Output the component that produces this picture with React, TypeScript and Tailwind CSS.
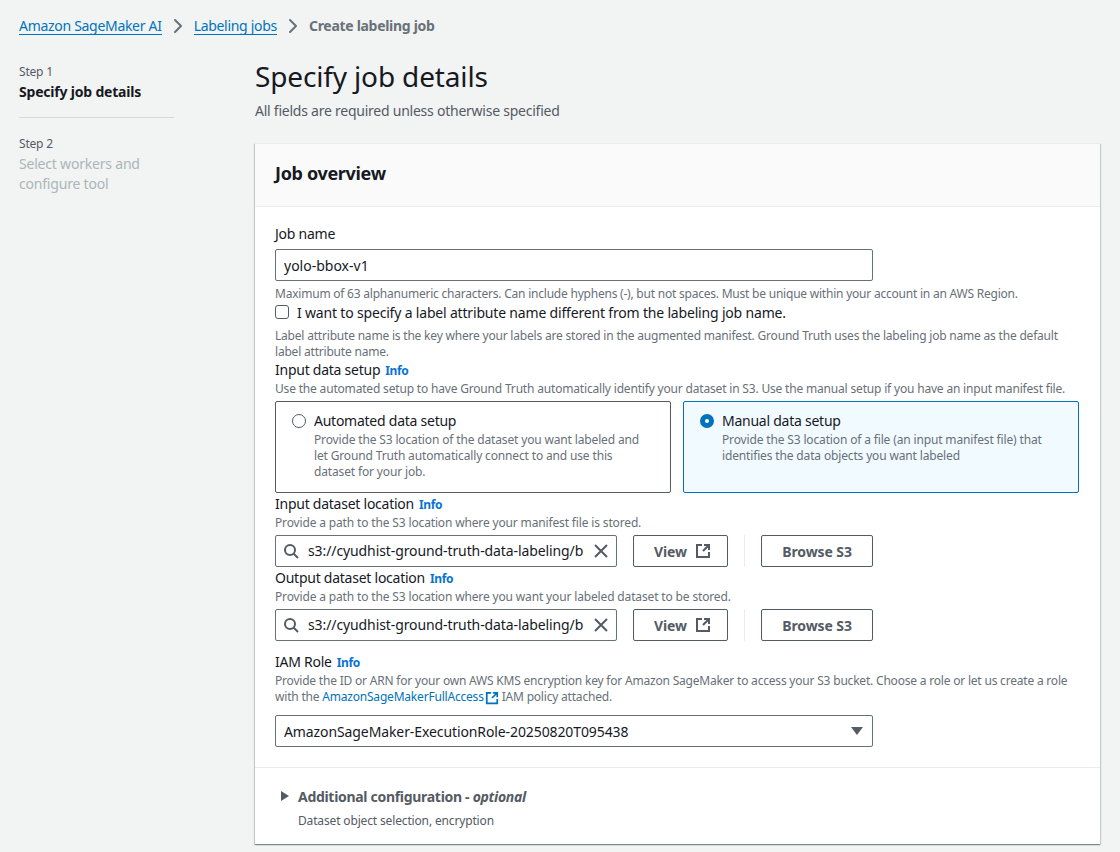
import { ChevronRight } from "lucide-react";

const FONT = "font-['Noto_Sans',sans-serif]";

function ExternalIcon({ className }: { className: string }) {
  return (
    <svg viewBox="0 0 16 16" fill="none" stroke="currentColor" strokeWidth="2" className={className}>
      <path d="M7 2H2v12h12V9" />
      <path d="M9 2h5v5M14 2L8 8" />
    </svg>
  );
}

function Info() {
  return <span className="ml-[5px] text-[12px] font-bold tracking-[-0.4px] text-[#0972d3]">Info</span>;
}

function Label({ children }: { children: React.ReactNode }) {
  return <div className="h-[20px] text-[14px] leading-[20px] tracking-[-0.25px] text-[#16191f]">{children}</div>;
}

function Hint({ children, tracking = "tracking-[-0.15px]" }: { children: React.ReactNode; tracking?: string }) {
  return <div className={`-mb-[1px] whitespace-nowrap pt-[1px] text-[12px] leading-[16px] text-[#687078] ${tracking}`}>{children}</div>;
}

function S3Row() {
  return (
    <div className="mt-[5px] flex items-center">
      <div className="flex h-[32px] w-[342px] items-center rounded-[2px] border border-[#687078] bg-white pl-[7px] pr-[7px]">
        <svg viewBox="0 0 16 16" fill="none" stroke="#545b64" strokeWidth="2" className="h-[16px] w-[16px] shrink-0">
          <circle cx="7" cy="7" r="5" />
          <path d="M10.5 10.5L15 15" />
        </svg>
        <div className="ml-[9px] w-[276px] overflow-hidden whitespace-nowrap text-[14px] leading-[20px] tracking-[-0.1px] text-[#16191f]">
          s3://cyudhist-ground-truth-data-labeling/bb
        </div>
        <svg viewBox="0 0 16 16" fill="none" stroke="#545b64" strokeWidth="2" className="ml-[9px] h-[16px] w-[16px] shrink-0">
          <path d="M2 2l12 12M14 2L2 14" />
        </svg>
      </div>
      <button className="ml-[16px] flex h-[32px] w-[95px] items-center gap-[8px] rounded-[2px] border border-[#545b64] bg-white pl-[20px] text-[14px] font-bold tracking-[-0.1px] text-[#545b64]">
        View
        <ExternalIcon className="h-[16px] w-[16px]" />
      </button>
      <div className="ml-[16px] h-[32px] w-px bg-[#eaeded]" />
      <button className="ml-[16px] h-[32px] w-[112px] rounded-[2px] border border-[#545b64] bg-white text-[14px] font-bold tracking-[-0.1px] text-[#545b64]">
        Browse S3
      </button>
    </div>
  );
}

export default function App() {
  return (
    <div className={`${FONT} h-[852px] w-[1120px] overflow-hidden bg-[#f2f3f3]`}>
      <nav className="flex h-[52px] items-center pl-[19px] text-[14px] leading-[20px] tracking-[-0.3px]">
        <a className="border-b border-[#0073bb] leading-[17px] text-[#0073bb]">Amazon SageMaker AI</a>
        <ChevronRight size={24} strokeWidth={2} className="mx-[4px] text-[#687078]" />
        <a className="border-b border-[#0073bb] leading-[17px] text-[#0073bb]">Labeling jobs</a>
        <ChevronRight size={24} strokeWidth={2} className="mx-[4px] text-[#687078]" />
        <span className="font-bold text-[#687078]">Create labeling job</span>
      </nav>

      <div className="flex">
        <aside className="ml-[19px] w-[155px] pt-[11px] text-[14px] tracking-[-0.2px]">
          <div className="text-[12px] leading-[18px] text-[#545b64]">Step 1</div>
          <div className="mt-[1px] font-bold leading-[20px] text-[#16191f]">Specify job details</div>
          <div className="mt-[15px] border-t border-[#d5dbdb]" />
          <div className="mt-[17px] text-[12px] leading-[18px] text-[#545b64]">Step 2</div>
          <div className="mt-[1px] leading-[20px] text-[#aab7b8]">
            Select workers and
            <br />
            configure tool
          </div>
        </aside>

        <main className="ml-[81px] w-[845px] pt-[6px]">
          <h1 className="text-[28px] font-normal leading-[36px] tracking-[-0.15px] text-[#16191f]">Specify job details</h1>
          <p className="mt-[7px] text-[14px] leading-[20px] tracking-[-0.24px] text-[#545b64]">All fields are required unless otherwise specified</p>

          <section className="mt-[22px] h-[701px] border-t border-[#eaeded] bg-white shadow-[0_1px_1px_0_rgba(0,28,36,0.3),1px_1px_1px_0_rgba(0,28,36,0.15),-1px_1px_1px_0_rgba(0,28,36,0.15)]">
            <div className="flex h-[63px] items-center border-b border-[#eaeded] bg-[#fafafa] pb-[4px] pl-[20px] text-[18px] font-bold tracking-[-0.33px] text-[#16191f]">
              Job overview
            </div>

            <div className="px-[20px] pt-[17px]">
              <Label>Job name</Label>
              <div className="mt-[5px] flex h-[32px] w-[598px] items-center rounded-[2px] border border-[#687078] bg-white pl-[8px] text-[14px] text-[#16191f]">
                yolo-bbox-v1
              </div>
              <div className="mt-[4px]">
                <Hint tracking="tracking-[-0.22px]">Maximum of 63 alphanumeric characters. Can include hyphens (-), but not spaces. Must be unique within your account in an AWS Region.</Hint>
              </div>
              <div className="mt-[1px] flex h-[20px] items-center text-[14px] tracking-[-0.18px] text-[#16191f]">
                <div className="h-[14px] w-[14px] rounded-[3px] border border-[#545b64] bg-white" />
                <span className="ml-[8px]">I want to specify a label attribute name different from the labeling job name.</span>
              </div>
              <div className="mt-[5px]">
                <Hint tracking="tracking-[-0.2px]">
                  Label attribute name is the key where your labels are stored in the augmented manifest. Ground Truth uses the labeling job name as the default
                  <br />
                  label attribute name.
                </Hint>
              </div>
              <div className="mt-[1px]">
                <Label>
                  Input data setup
                  <Info />
                </Label>
              </div>
              <Hint tracking="tracking-[-0.18px]">Use the automated setup to have Ground Truth automatically identify your dataset in S3. Use the manual setup if you have an input manifest file.</Hint>

              <div className="mt-[5px] flex gap-[12px]">
                <div className="flex h-[92px] w-[396px] rounded-[2px] border border-[#545b64] pl-[16px] pt-[9px]">
                  <div className="mt-[3px] h-[14px] w-[14px] rounded-full border border-[#545b64] bg-white" />
                  <div className="ml-[8px]">
                    <div className="text-[14px] leading-[20px] tracking-[-0.25px] text-[#16191f]">Automated data setup</div>
                    <Hint>
                      Provide the S3 location of the dataset you want labeled and
                      <br />
                      let Ground Truth automatically connect to and use this
                      <br />
                      dataset for your job.
                    </Hint>
                  </div>
                </div>
                <div className="flex h-[92px] w-[396px] rounded-[2px] border border-[#0073bb] bg-[#f1faff] pl-[16px] pt-[9px]">
                  <div className="mt-[3px] h-[14px] w-[14px] rounded-full border-[5px] border-[#0073bb] bg-white" />
                  <div className="ml-[8px]">
                    <div className="text-[14px] leading-[20px] tracking-[-0.25px] text-[#16191f]">Manual data setup</div>
                    <Hint>
                      Provide the S3 location of a file (an input manifest file) that
                      <br />
                      identifies the data objects you want labeled
                    </Hint>
                  </div>
                </div>
              </div>

              <div className="mt-[1px]">
                <Label>
                  Input dataset location
                  <Info />
                </Label>
              </div>
              <Hint>Provide a path to the S3 location where your manifest file is stored.</Hint>
              <S3Row />

              <div className="mt-[1px]">
                <Label>
                  Output dataset location
                  <Info />
                </Label>
              </div>
              <Hint>Provide a path to the S3 location where you want your labeled dataset to be stored.</Hint>
              <S3Row />

              <div className="mt-[11px]">
                <Label>
                  IAM Role
                  <Info />
                </Label>
              </div>
              <Hint tracking="tracking-[-0.2px]">
                Provide the ID or ARN for your own AWS KMS encryption key for Amazon SageMaker to access your S3 bucket. Choose a role or let us create a role
                <br />
                with the <span className="text-[#0073bb]">AmazonSageMakerFullAccess</span>
                <ExternalIcon className="ml-px mr-[3px] inline h-[14px] w-[14px] align-[-4px] text-[#0073bb]" />
                IAM policy attached.
              </Hint>
              <div className="mt-[11px] flex h-[32px] w-[598px] items-center justify-between rounded-[2px] border border-[#687078] bg-white pl-[8px] pr-[9px] text-[14px] tracking-[-0.1px] text-[#16191f]">
                AmazonSageMaker-ExecutionRole-20250820T095438
                <svg viewBox="0 0 12 8" className="h-[8px] w-[12px] fill-[#545b64]">
                  <path d="M0 0h12L6 8z" />
                </svg>
              </div>
            </div>

            <div className="mt-[20px] border-t border-[#eaeded] pl-[26px] pt-[18px]">
              <div className="flex h-[20px] items-center text-[14px] font-bold tracking-[-0.3px] text-[#545b64]">
                <svg viewBox="0 0 8 10" className="h-[10px] w-[8px] fill-[#545b64]">
                  <path d="M0 0l8 5-8 5z" />
                </svg>
                <span className="ml-[9px]">
                  Additional configuration - <em>optional</em>
                </span>
              </div>
              <div className="ml-[17px] mt-[7px] text-[12px] leading-[16px] tracking-[-0.15px] text-[#545b64]">Dataset object selection, encryption</div>
            </div>
          </section>
        </main>
      </div>
    </div>
  );
}
